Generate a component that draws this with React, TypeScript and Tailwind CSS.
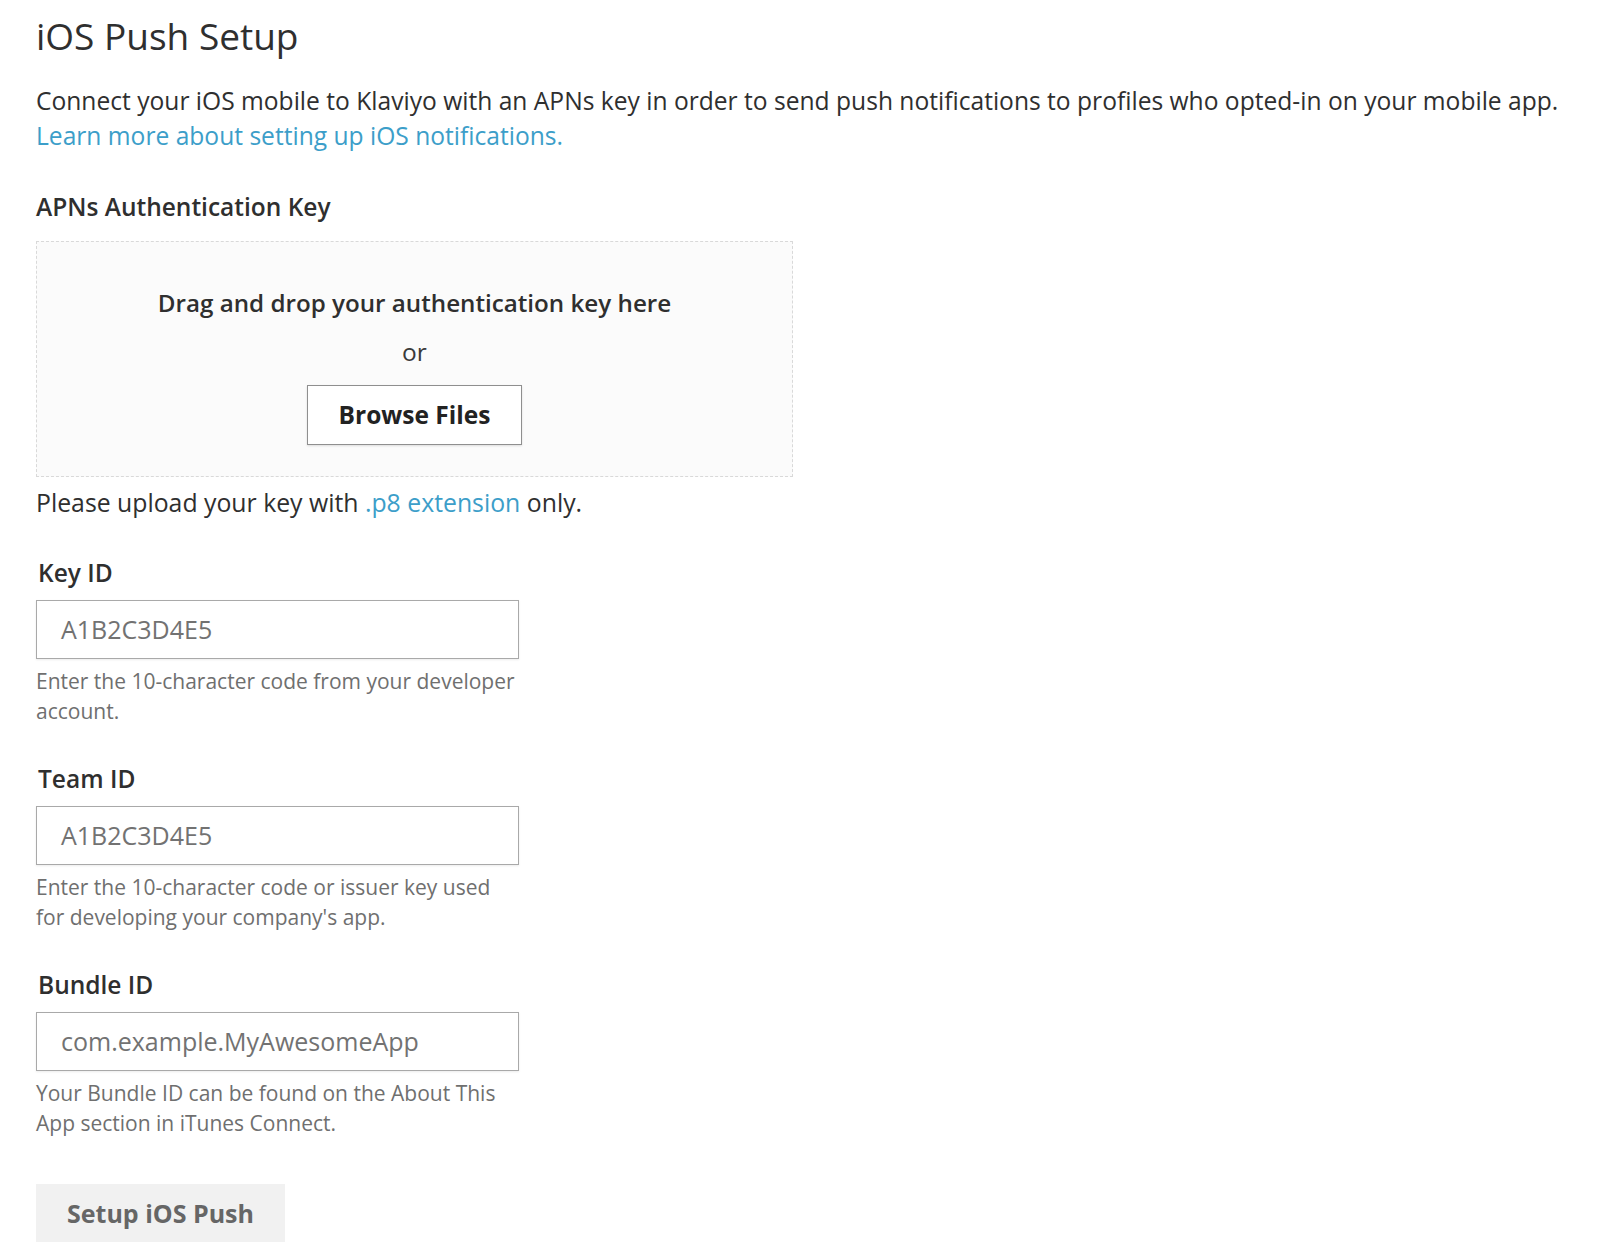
import React from "react";

const font = { fontFamily: "'Open Sans', Lato, Arial, sans-serif" };

const Field = ({ label, value, help }: { label: string; value: string; help: React.ReactNode }) => (
  <div className="mt-[38px] first:mt-0">
    <label className="block pl-[2px] text-[24.5px] font-semibold leading-[30px] text-[#2f2f2f]">{label}</label>
    <div className="mt-[12px] flex h-[59px] w-[483px] items-center border border-[#a9a9a9] bg-white px-[24px] text-[25px] text-[#727272] shadow-[0_1px_2px_rgba(0,0,0,0.08)]">
      {value}
    </div>
    <p className="mt-[7px] w-[482px] text-[21px] leading-[30px] text-[#6f6f6f]">{help}</p>
  </div>
);

export default function App() {
  return (
    <div className="min-h-[1242px] overflow-hidden bg-white pl-[36px] pt-[14px] text-[#333]" style={font}>
      <h1 className="text-[37px] font-normal leading-[44px] text-[#2f2f2f]">iOS Push Setup</h1>

      <p className="mt-[25px] text-[24.6px] leading-[35px] text-[#2f2f2f]">
        <span className="whitespace-nowrap">
          Connect your iOS mobile to Klaviyo with an APNs key in order to send push notifications to profiles who opted-in on your mobile app.
        </span>
        <br />
        <a className="text-[#3c9ec9]" href="#">Learn more about setting up iOS notifications.</a>
      </p>

      <h2 className="mt-[39px] text-[24.5px] font-semibold leading-[30px] text-[#2f2f2f]">APNs Authentication Key</h2>

      <div className="mt-[19px] flex h-[236px] w-[757px] flex-col items-center border border-dashed border-[#d9d9d9] bg-[#fbfbfb] pt-[46px]">
        <p className="text-[24.2px] font-semibold leading-[30px] text-[#2f2f2f]">Drag and drop your authentication key here</p>
        <p className="mt-[19px] text-[24.5px] leading-[30px] text-[#3a3a3a]">or</p>
        <button className="mt-[18px] h-[60px] w-[215px] border border-[#8f8f8f] bg-white text-[24.5px] font-bold text-[#222] shadow-[0_1px_2px_rgba(0,0,0,0.12)]">
          Browse Files
        </button>
      </div>

      <p className="mt-[10px] text-[24.8px] leading-[30px] text-[#2f2f2f]">
        Please upload your key with <span className="text-[#3c9ec9]">.p8 extension</span> only.
      </p>

      <div className="mt-[41px]">
        <Field label="Key ID" value="A1B2C3D4E5" help="Enter the 10-character code from your developer account." />
        <Field
          label="Team ID"
          value="A1B2C3D4E5"
          help="Enter the 10-character code or issuer key used for developing your company's app."
        />
        <Field
          label="Bundle ID"
          value="com.example.MyAwesomeApp"
          help="Your Bundle ID can be found on the About This App section in iTunes Connect."
        />
      </div>

      <button className="mt-[46px] block w-[249px] bg-[#f1f1f1] pb-[22px] pt-[14px] text-[25px] font-bold leading-[30px] text-[#666]">
        Setup iOS Push
      </button>
    </div>
  );
}
